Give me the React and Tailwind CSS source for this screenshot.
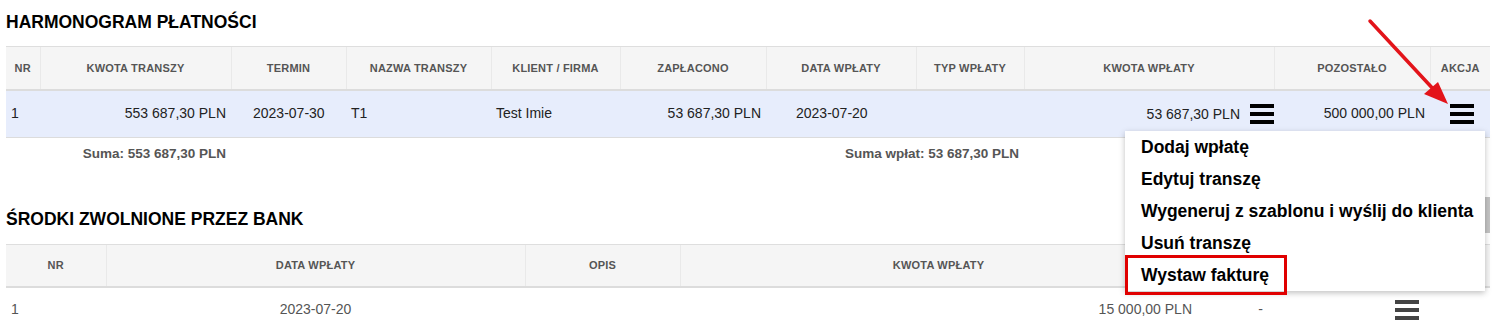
const FONT = { fontFamily: '"Liberation Sans", Arial, sans-serif' };

const SCHEDULE_COLS = [
  { label: "NR", w: "w-[34px]" },
  { label: "KWOTA TRANSZY", w: "w-[191px]" },
  { label: "TERMIN", w: "w-[115px]" },
  { label: "NAZWA TRANSZY", w: "w-[145px]" },
  { label: "KLIENT / FIRMA", w: "w-[129px]" },
  { label: "ZAPŁACONO", w: "w-[146px]" },
  { label: "DATA WPŁATY", w: "w-[150px]" },
  { label: "TYP WPŁATY", w: "w-[108px]" },
  { label: "KWOTA WPŁATY", w: "w-[250px]" },
  { label: "POZOSTAŁO", w: "w-[156px]" },
  { label: "AKCJA", w: "w-[60px]" },
];

const BANK_COLS = [
  { label: "NR", w: "w-[100px]" },
  { label: "DATA WPŁATY", w: "w-[419px]" },
  { label: "OPIS", w: "w-[155px]" },
  { label: "KWOTA WPŁATY", w: "w-[517px]" },
  { label: "STATUS", w: "w-[127px]" },
  { label: "AKCJA", w: "w-[166px]" },
];

const MENU = [
  "Dodaj wpłatę",
  "Edytuj transzę",
  "Wygeneruj z szablonu i wyślij do klienta",
  "Usuń transzę",
  "Wystaw fakturę",
];

// three thick bars, the app's "actions" toggle
const Burger = ({ tone = "bg-black" }) => (
  <span className="inline-flex flex-col gap-[4px] w-[24px] align-middle">
    <span className={`h-[4px] ${tone}`} />
    <span className={`h-[4px] ${tone}`} />
    <span className={`h-[4px] ${tone}`} />
  </span>
);

const HeadRow = ({ cols }) => (
  <tr className="bg-[#f5f5f5] h-[43px]">
    {cols.map((c, i) => (
      <th
        key={i}
        className={`${c.w} border-t border-[#dedede] border-b-2 border-b-[#dcdcdc] ${
          i > 0 ? "border-l border-l-[#e9e9e9]" : ""
        } text-center text-[11px] font-bold text-[#555] tracking-[0.2px] px-1`}
      >
        {c.label}
      </th>
    ))}
  </tr>
);

export default function App() {
  return (
    <div
      className="relative w-[1495px] h-[331px] overflow-hidden bg-white pl-[6px] pr-[5px]"
      style={FONT}
    >
      <h2 className="pt-[12px] mb-[14px] leading-[20px] text-[17.5px] font-bold text-black">
        HARMONOGRAM PŁATNOŚCI
      </h2>

      <table className="table-fixed w-[1484px] border-collapse">
        <thead>
          <HeadRow cols={SCHEDULE_COLS} />
        </thead>
        <tbody>
          <tr className="bg-[#e7edfc] h-[48px] border-b border-[#dcdcdc] text-[14px] text-[#222]">
            <td className="px-[5px]">1</td>
            <td className="px-[5px] text-right">553 687,30 PLN</td>
            <td className="px-[5px] pl-[22px]">2023-07-30</td>
            <td className="px-[5px]">T1</td>
            <td className="px-[5px]">Test Imie</td>
            <td className="px-[5px] text-right">53 687,30 PLN</td>
            <td className="px-[5px] pl-[30px]">2023-07-20</td>
            <td />
            <td className="pr-0 text-right whitespace-nowrap">
              <span className="align-middle">53 687,30 PLN</span>
              <span className="ml-[10px]">
                <Burger />
              </span>
            </td>
            <td className="px-[5px] text-right">500 000,00 PLN</td>
            <td className="pl-[20px]">
              <Burger />
            </td>
          </tr>
          <tr className="h-[32px] text-[13.5px] font-bold text-[#555]">
            <td />
            <td className="px-[5px] text-right">Suma: 553 687,30 PLN</td>
            <td colSpan={3} />
            <td colSpan={3} className="px-[5px] text-right">
              Suma wpłat: 53 687,30 PLN
            </td>
            <td colSpan={3} />
          </tr>
        </tbody>
      </table>

      <h2 className="pt-[39px] mb-[15px] leading-[20px] text-[17.5px] font-bold text-black">
        ŚRODKI ZWOLNIONE PRZEZ BANK
      </h2>

      <table className="table-fixed w-[1484px] border-collapse">
        <thead>
          <HeadRow cols={BANK_COLS} />
        </thead>
        <tbody>
          <tr className="h-[44px] text-[14px] text-[#555]">
            <td className="px-[5px]">1</td>
            <td className="text-center">2023-07-20</td>
            <td />
            <td className="px-[5px] text-right">15 000,00 PLN</td>
            <td className="text-center">-</td>
            <td className="text-center">
              <Burger tone="bg-[#444]" />
            </td>
          </tr>
        </tbody>
      </table>

      {/* scroll thumb peeking out beside the menu */}
      <div className="absolute left-[1485px] top-[197px] w-[5px] h-[36px] bg-[#c4c4c4]" />

      {/* open actions menu */}
      <div className="absolute left-[1125px] top-[131px] w-[360px] bg-white shadow-[0_2px_6px_rgba(0,0,0,0.25)]">
        {MENU.map((item) => (
          <div
            key={item}
            className="h-[32px] flex items-center pl-[16px] text-[17.5px] font-bold text-black whitespace-nowrap"
          >
            {item}
          </div>
        ))}
      </div>

      {/* annotation: highlight box */}
      <div className="absolute left-[1125px] top-[255px] w-[162px] h-[40px] border-[3px] border-[#e00000]" />

      {/* annotation: arrow */}
      <svg
        className="absolute left-[1360px] top-[12px]"
        width="100"
        height="100"
        viewBox="0 0 100 100"
      >
        <line x1="10" y1="9" x2="76" y2="80" stroke="#e3141a" strokeWidth="3.5" strokeLinecap="round" />
        <polygon points="88,92 64,82 78,70" fill="#e3141a" />
      </svg>
    </div>
  );
}
